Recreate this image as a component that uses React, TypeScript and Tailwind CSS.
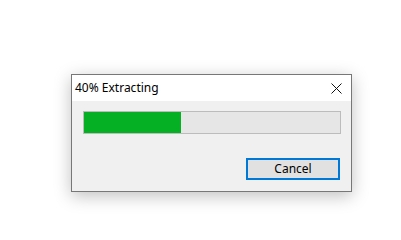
import React from "react";

export default function App() {
  const progress = 38;
  return (
    <div className="w-[401px] h-[240px] bg-white pt-[74px] pl-[71px]" style={{ fontFamily: '"Segoe UI", "Noto Sans", "Liberation Sans", sans-serif' }}>
      <div className="w-[281px] h-[118px] border border-[#777777] bg-[#f0f0f0] flex flex-col shadow-[0_4px_16px_rgba(0,0,0,0.25)]">
        {/* title bar */}
        <div className="h-[26px] bg-white flex items-center justify-between pl-[3px] pr-[9px]">
          <span className="text-[12px] text-black leading-none">40% Extracting</span>
          <svg width="11" height="11" viewBox="0 0 11 11">
            <path d="M0.5 0.5 L10.5 10.5 M10.5 0.5 L0.5 10.5" stroke="#111" strokeWidth="1" fill="none" />
          </svg>
        </div>

        {/* body */}
        <div className="flex-1 flex flex-col px-[11px] pt-[10px]">
          <div className="h-[23px] w-[258px] border border-[#bcbcbc] bg-[#e6e6e6]">
            <div className="h-full bg-[#06b025]" style={{ width: `${progress}%` }}></div>
          </div>
          <div className="flex justify-end mt-[24px]">
            <button className="w-[94px] h-[22px] border-2 border-[#0078d7] bg-[#e1e1e1] text-[12px] text-black leading-none">
              Cancel
            </button>
          </div>
        </div>
      </div>
    </div>
  );
}
